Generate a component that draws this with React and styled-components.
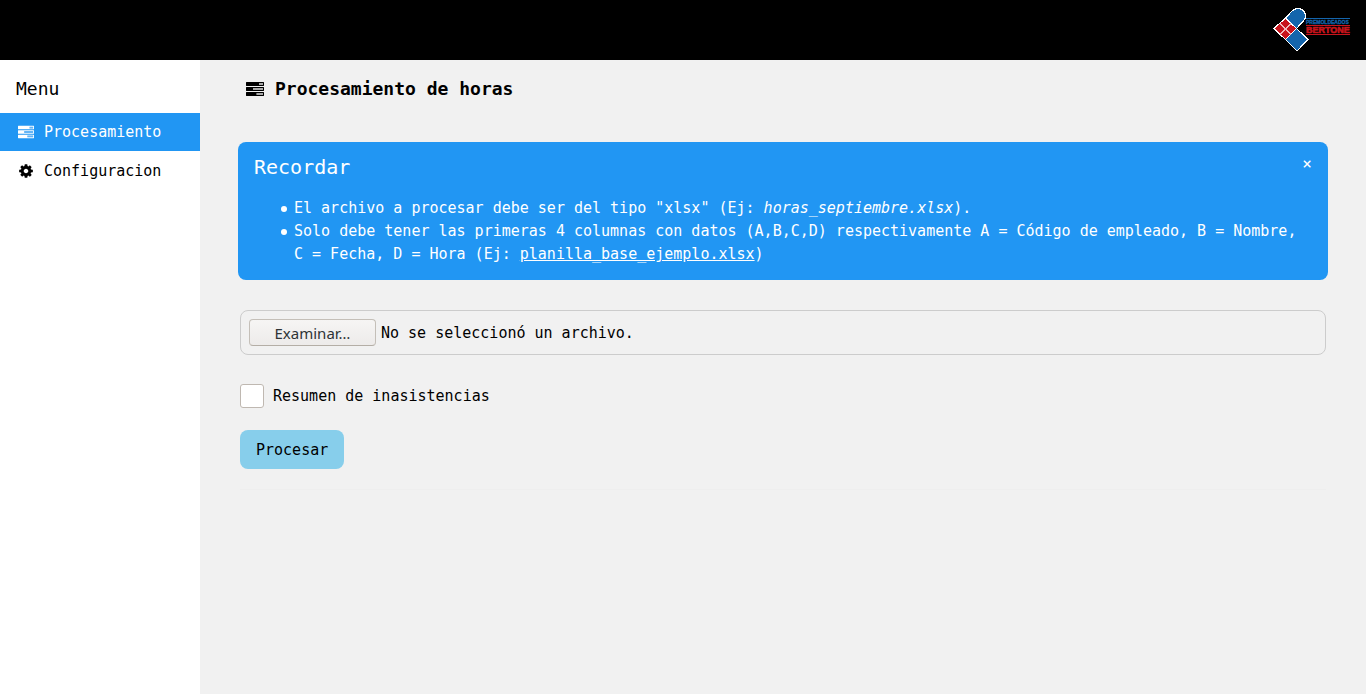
import React, { useRef, useState } from "react";
import styled, { createGlobalStyle, css } from "styled-components";

const GlobalStyle = createGlobalStyle`
  *, *::before, *::after { box-sizing: border-box; }
  body {
    margin: 0;
    background: #f1f1f1;
    color: #000;
    font: 15px/22px "DejaVu Sans Mono", monospace;
  }
  button, input { font: inherit; color: inherit; }
`;

const Page = styled.div`
  display: flex;
  flex-direction: column;
  min-height: 100vh;
`;

const TopBar = styled.header`
  display: flex;
  justify-content: flex-end;
  height: 60px;
  padding: 6px 15px;
  background: #000;
`;

const Body = styled.div`
  display: flex;
  flex: 1;
`;

const Sidebar = styled.nav`
  flex: 0 0 200px;
  background: #fff;
`;

const MenuTitle = styled.h2`
  margin: 0;
  padding: 15px 16px 11px;
  font-size: 18px;
  line-height: 27px;
  font-weight: 400;
`;

const MenuLink = styled.a`
  display: flex;
  align-items: center;
  gap: 10px;
  height: 38px;
  margin-bottom: 1px;
  padding: 0 18px;
  color: #000;
  text-decoration: none;
  ${(p) => p.$active && css`
    background: #2196f3;
    color: #fff;
  `}
`;

const Icon = styled.svg`
  flex: none;
  width: ${(p) => p.$size}px;
  height: ${(p) => p.$size}px;
  fill: currentColor;
`;

const Main = styled.main`
  flex: 1;
  min-width: 0;
  padding: 15px 38px;
`;

const PageTitle = styled.h1`
  display: flex;
  align-items: center;
  gap: 11px;
  margin: 0 8px 40px;
  font-size: 18px;
  line-height: 27px;
`;

const Notice = styled.section`
  padding: 10px 16px 14px;
  border-radius: 8px;
  background: #2196f3;
  color: #fff;
`;

const NoticeHead = styled.div`
  display: flex;
  justify-content: space-between;
  align-items: flex-start;
  margin-bottom: 15px;
`;

const NoticeTitle = styled.h3`
  margin: 0;
  font-size: 20px;
  line-height: 30px;
  font-weight: 400;
`;

const CloseButton = styled.button`
  padding: 0;
  border: 0;
  background: none;
  font-size: 16px;
  line-height: 24px;
  cursor: pointer;
`;

const NoticeList = styled.ul`
  margin: 0;
  padding-left: 40px;
  line-height: 23px;
  list-style: none;
`;

const NoticeItem = styled.li`
  position: relative;
  &::before {
    content: "";
    position: absolute;
    top: 9px;
    left: -13px;
    width: 6px;
    height: 6px;
    border-radius: 50%;
    background: currentColor;
  }
`;

const SampleLink = styled.a`
  color: inherit;
`;

const Form = styled.form`
  display: flex;
  flex-direction: column;
  align-items: flex-start;
  margin: 30px 2px 0;
`;

const FileField = styled.div`
  display: flex;
  align-items: center;
  gap: 5px;
  align-self: stretch;
  height: 45px;
  padding: 8px;
  border: 1px solid #ccc;
  border-radius: 8px;
`;

const HiddenFile = styled.input`
  display: none;
`;

const BrowseButton = styled.button`
  width: 127px;
  height: 27px;
  padding: 0;
  border: 1px solid #c4bfb8;
  border-bottom-color: #b4aea6;
  border-radius: 4px;
  background: linear-gradient(#f6f5f4, #edebea);
  color: #2e3436;
  font: 15px/22px "Noto Sans", sans-serif;
`;

const CheckRow = styled.label`
  display: flex;
  align-items: center;
  gap: 9px;
  margin: 29px 0 22px;
`;

const CheckBox = styled.input`
  appearance: none;
  width: 24px;
  height: 24px;
  margin: 0;
  border: 1px solid #bfb8b1;
  border-radius: 3px;
  background: #fff;
  &:checked { background: #2196f3; }
`;

const SubmitButton = styled.button`
  height: 39px;
  padding: 0 16px;
  border: 0;
  border-radius: 8px;
  background: #87ceeb;
  cursor: pointer;
`;

const Divider = styled.hr`
  height: 1px;
  margin: 20px 2px;
  border: 0;
  background: #eee;
`;

function TasksIcon({ size }) {
  return (
    <Icon $size={size} viewBox="0 0 18 18" aria-hidden="true">
      <path
        fillRule="evenodd"
        d="M.4 2h17.200q.4 0 .4.4v3.200q0 .4-.4.4H.4q-.4 0-.4-.4V2.400q0-.4.4-.4zM13 3v2h4V3zM.4 7h17.200q.4 0 .4.4v3.200q0 .4-.4.4H.4q-.4 0-.4-.4V7.400q0-.4.4-.4zM7 8v2h10V8zM.4 12h17.200q.4 0 .4.4v3.200q0 .4-.4.4H.4q-.4 0-.4-.4v-3.200q0-.4.4-.4zM10.500 13v2H17v-2z"
      />
      <path opacity=".3" d="M13 3h4v2h-4zM7 8h10v2H7zM10.500 13H17v2h-6.500z" />
    </Icon>
  );
}

function CogIcon({ size }) {
  return (
    <Icon $size={size} viewBox="0 0 1792 1792" aria-hidden="true">
      <path d="M1152 896q0-106-75-181t-181-75-181 75-75 181 75 181 181 75 181-75 75-181zm512-109v222q0 12-8 23t-20 13l-185 28q-19 54-39 91 35 50 107 138 10 12 10 25t-9 23q-27 37-99 108t-94 71q-12 0-26-9l-138-108q-44 23-91 38-16 136-29 186-7 28-36 28h-222q-14 0-24.5-8.5t-11.5-21.5l-28-184q-49-16-90-37l-141 107q-10 9-25 9-14 0-25-11-126-114-165-168-7-10-7-23 0-12 8-23 15-21 51-66.5t54-70.5q-27-50-41-99l-183-27q-13-2-21-12.5t-8-23.5v-222q0-12 8-23t19-13l186-28q14-46 39-92-40-57-107-138-10-12-10-24 0-10 9-23 26-36 98.5-107.5t94.5-71.5q13 0 26 10l138 107q44-23 91-38 16-136 29-186 7-28 36-28h222q14 0 24.5 8.5t11.5 21.5l28 184q49 16 90 37l142-107q9-9 24-9 13 0 25 10 129 119 165 170 7 8 7 22 0 12-8 23-15 21-51 66.5t-54 70.5q26 50 41 98l183 28q13 2 21 12.5t8 23.5z" />
    </Icon>
  );
}

function Logo() {
  return (
    <svg width="80" height="48" viewBox="0 0 80 48" role="img" aria-label="Bertone">
      <g stroke="#fff" strokeWidth="1.2" shapeRendering="crispEdges">
        <path d="M14.500 12.500 L20 6 Q23 2.500 27 2.500 Q34 3 34.500 10 Q34.500 13 32 15.500 L25.500 22.500 Z" fill="#1465ac" />
        <path d="M25.500 22.500 L37 33.500 L26 45 L14.500 33.500 Z" fill="#1465ac" />
        <path d="M14.500 12 L25.500 22.500 L14.500 33.500 L3 22.500 Z" fill="#c8141c" />
        <path d="M9 17.500 L20 28.500 M20 17.500 L9 28.500" stroke="#f0b8ba" strokeWidth="1" />
      </g>
      <path d="M35 12.500h44" stroke="#1465ac" />
      <text x="35" y="18" fill="#1465ac" fontFamily="Liberation Sans, sans-serif" fontSize="5" fontWeight="700" stroke="#1465ac" strokeWidth=".3">PREMOLDEADOS</text>
      <path d="M35 19.500h44M35 28.500h44" stroke="#c8141c" />
      <text x="35" y="27" fill="#c8141c" fontFamily="Liberation Sans, sans-serif" fontSize="9" fontWeight="700" stroke="#c8141c" strokeWidth=".6">BERTONE</text>
    </svg>
  );
}

export default function App() {
  const fileRef = useRef(null);
  const [fileName, setFileName] = useState("");
  const [noticeOpen, setNoticeOpen] = useState(true);

  return (
    <Page>
      <GlobalStyle />
      <TopBar><Logo /></TopBar>
      <Body>
        <Sidebar>
          <MenuTitle>Menu</MenuTitle>
          <MenuLink href="#procesamiento" $active><TasksIcon size={16} />Procesamiento</MenuLink>
          <MenuLink href="#configuracion"><CogIcon size={16} />Configuracion</MenuLink>
        </Sidebar>
        <Main>
          <PageTitle><TasksIcon size={18} />Procesamiento de horas</PageTitle>
          {noticeOpen && (
            <Notice>
              <NoticeHead>
                <NoticeTitle>Recordar</NoticeTitle>
                <CloseButton type="button" aria-label="Cerrar" onClick={() => setNoticeOpen(false)}>×</CloseButton>
              </NoticeHead>
              <NoticeList>
                <NoticeItem>El archivo a procesar debe ser del tipo "xlsx" (Ej: <em>horas_septiembre.xlsx</em>).</NoticeItem>
                <NoticeItem>
                  Solo debe tener las primeras 4 columnas con datos (A,B,C,D) respectivamente A = Código de empleado, B = Nombre, C = Fecha, D = Hora (Ej: <SampleLink href="#planilla">planilla_base_ejemplo.xlsx</SampleLink>)
                </NoticeItem>
              </NoticeList>
            </Notice>
          )}
          <Form onSubmit={(e) => e.preventDefault()}>
            <FileField>
              <HiddenFile
                ref={fileRef}
                type="file"
                accept=".xlsx"
                aria-label="Archivo"
                onChange={(e) => setFileName(e.target.files[0]?.name ?? "")}
              />
              <BrowseButton type="button" onClick={() => fileRef.current.click()}>Examinar…</BrowseButton>
              <span>{fileName || "No se seleccionó un archivo."}</span>
            </FileField>
            <CheckRow>
              <CheckBox type="checkbox" />
              Resumen de inasistencias
            </CheckRow>
            <SubmitButton type="submit">Procesar</SubmitButton>
          </Form>
          <Divider />
        </Main>
      </Body>
    </Page>
  );
}
